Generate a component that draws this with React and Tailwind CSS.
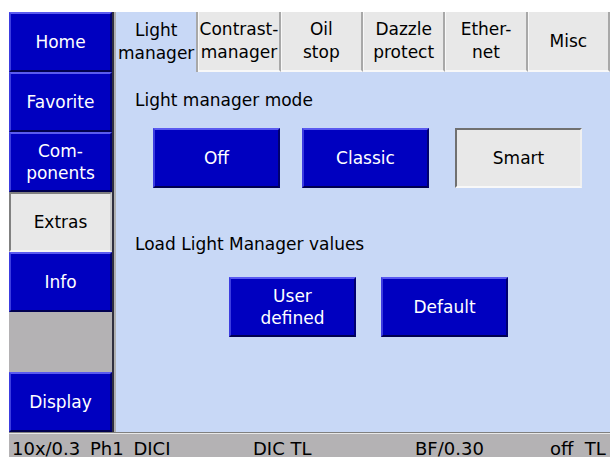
import React from "react";

const font = { fontFamily: '"DejaVu Sans", Verdana, sans-serif' };

function SideBtn({ children, active }) {
  if (active) {
    return (
      <div className="h-[60px] flex items-center justify-center text-center bg-[#e8e8e8] text-black border-t-2 border-l-2 border-t-[#808080] border-l-[#808080] border-b-2 border-r-2 border-b-[#f4f4f4] border-r-[#c8c8c8] text-[17px] leading-[22px]">
        {children}
      </div>
    );
  }
  return (
    <div className="h-[60px] flex items-center justify-center text-center bg-[#0000c0] text-white border-t-2 border-l-2 border-t-[#5a5af0] border-l-[#3c3ce0] border-b-2 border-r-2 border-b-[#000050] border-r-[#000070] text-[17px] leading-[22px]">
      {children}
    </div>
  );
}

function BlueBtn({ children }) {
  return (
    <div className="w-[127px] h-[60px] flex items-center justify-center text-center bg-[#0000c0] text-white border-t-2 border-l-2 border-t-[#5a5af0] border-l-[#3c3ce0] border-b-2 border-r-2 border-b-[#000050] border-r-[#000070] text-[17px] leading-[22px]">
      {children}
    </div>
  );
}

function GrayBtn({ children }) {
  return (
    <div className="w-[127px] h-[60px] flex items-center justify-center text-center bg-[#e8e8e8] text-black border-t-2 border-l-2 border-t-[#707070] border-l-[#707070] border-b-2 border-r-2 border-b-[#f8f8f8] border-r-[#f0f0f0] text-[17px] leading-[22px]">
      {children}
    </div>
  );
}

function Tab({ children, active }) {
  if (active) {
    return (
      <div className="h-full flex items-center justify-center text-center bg-[#c8d8f6] text-black text-[17px] leading-[23px] border-r-2 border-r-[#a8a8a8] whitespace-nowrap">
        {children}
      </div>
    );
  }
  return (
    <div className="h-full flex items-center justify-center text-center bg-[#e8e8e8] text-black text-[17px] leading-[23px] border-l border-l-[#f8f8f8] border-r-2 border-r-[#a8a8a8] border-b-2 border-b-[#f8f8f8] whitespace-nowrap">
      {children}
    </div>
  );
}

export default function App() {
  return (
    <div className="w-[610px] h-[457px] bg-white pt-[12px] pl-[9px] flex flex-col overflow-hidden" style={font}>
      <div className="flex h-[420px]">
        <div className="w-[103px] flex flex-col">
          <SideBtn>Home</SideBtn>
          <SideBtn>Favorite</SideBtn>
          <SideBtn>Com-<br />ponents</SideBtn>
          <SideBtn active>Extras</SideBtn>
          <SideBtn>Info</SideBtn>
          <div className="h-[60px] bg-[#b4b2b4]" />
          <SideBtn>Display</SideBtn>
        </div>
        <div className="w-[2px] bg-[#303040]" />
        <div className="w-[2px] bg-[#b0b0b0]" />
        <div className="flex-1 flex flex-col bg-[#c8d8f6]">
          <div className="h-[60px] grid grid-cols-6 bg-[#e8e8e8]">
            <Tab active>Light<br />manager</Tab>
            <Tab>Contrast-<br />manager</Tab>
            <Tab>Oil<br />stop</Tab>
            <Tab>Dazzle<br />protect</Tab>
            <Tab>Ether-<br />net</Tab>
            <Tab>Misc</Tab>
          </div>
          <div className="flex-1 flex flex-col pl-[19px]">
            <div className="mt-[17px] text-[17px] leading-[22px] text-black">Light manager mode</div>
            <div className="mt-[17px] ml-[18px] flex">
              <BlueBtn>Off</BlueBtn>
              <div className="w-[22px]" />
              <BlueBtn>Classic</BlueBtn>
              <div className="w-[26px]" />
              <GrayBtn>Smart</GrayBtn>
            </div>
            <div className="mt-[45px] text-[17px] leading-[22px] text-black">Load Light Manager values</div>
            <div className="mt-[22px] ml-[94px] flex gap-[25px]">
              <BlueBtn>User<br />defined</BlueBtn>
              <BlueBtn>Default</BlueBtn>
            </div>
          </div>
        </div>
      </div>
      <div className="h-[25px] bg-[#b4b2b4] border-t border-t-[#808080] relative text-[18px] leading-[22px] text-black">
        <div className="absolute inset-x-0 top-0 h-[1px] bg-[#e8e8e8]" />
        <span className="absolute left-[3px] top-[5px] [word-spacing:4px]">10x/0.3 Ph1 DICI</span>
        <span className="absolute left-[244px] top-[5px]">DIC TL</span>
        <span className="absolute left-[406px] top-[5px]">BF/0.30</span>
        <span className="absolute left-[541px] top-[5px]">off&nbsp;&nbsp;TL</span>
      </div>
    </div>
  );
}
